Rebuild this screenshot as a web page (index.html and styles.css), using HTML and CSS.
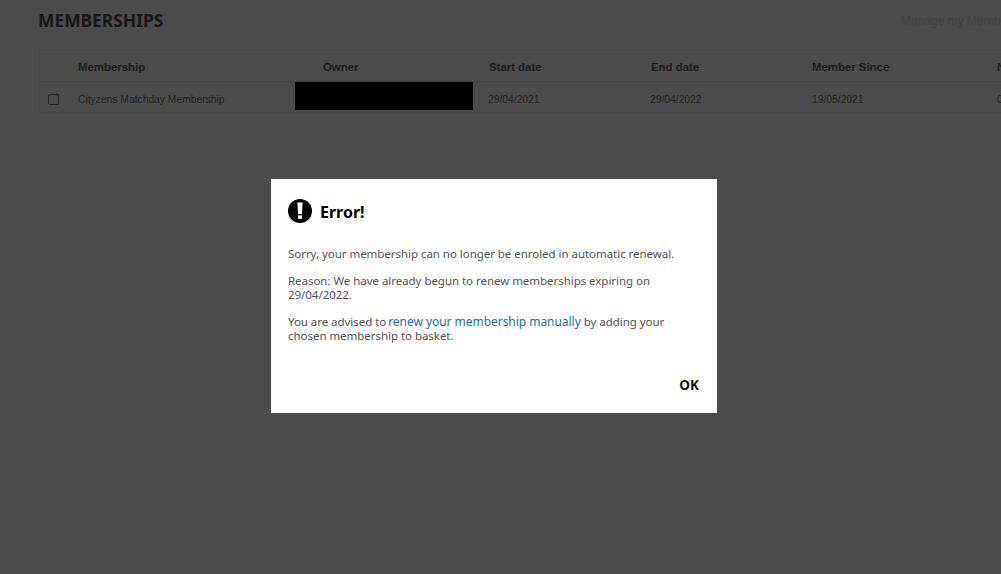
FILE: index.html
```html
<!DOCTYPE html>
<html lang="en">
<head>
<meta charset="utf-8">
<title>Memberships</title>
<link rel="stylesheet" href="styles.css">
</head>
<body>
<main class="page">
  <header class="page-head">
    <h1 class="page-title">MEMBERSHIPS</h1>
    <a class="manage-link">Manage my Memberships</a>
  </header>
  <section class="table">
    <div class="row head-row">
      <span></span>
      <span>Membership</span>
      <span class="owner-head">Owner</span>
      <span class="cell head-cell">Start date</span>
      <span class="cell head-cell">End date</span>
      <span class="cell">Member Since</span>
      <span class="cell">Next</span>
    </div>
    <div class="row body-row">
      <span class="check"></span>
      <span>Cityzens Matchday Membership</span>
      <span class="redacted"></span>
      <span class="cell">29/04/2021</span>
      <span class="cell">29/04/2022</span>
      <span class="cell">19/05/2021</span>
      <span class="cell">0</span>
    </div>
  </section>
</main>
<div class="overlay">
  <div class="dialog" role="dialog">
    <div class="dialog-head">
      <svg class="error-icon" viewBox="0 0 24 24" width="24" height="24" aria-hidden="true">
        <circle cx="12" cy="12" r="12" fill="#000"/>
        <path d="M9.3 3.5h5.4l-.8 11.5h-3.8z" fill="#fff"/>
        <rect x="10" y="16.3" width="4" height="3.5" fill="#fff"/>
      </svg>
      <h2 class="dialog-title">Error!</h2>
    </div>
    <p class="dialog-text">Sorry, your membership can no longer be enroled in automatic renewal.</p>
    <p class="dialog-text">Reason: We have already begun to renew memberships expiring on<br>29/04/2022.</p>
    <p class="dialog-text">You are advised to <a class="dialog-link">renew your membership manually</a> by adding your<br>chosen membership to basket.</p>
    <div class="dialog-actions"><button class="ok-button">OK</button></div>
  </div>
</div>
</body>
</html>
```
FILE: styles.css
```css
* { box-sizing: border-box; }
html, body { margin: 0; height: 100%; overflow: hidden; }
body { background: #4b4b4b; font-family: "Liberation Sans", Arial, sans-serif; }
.page { width: 1001px; padding: 10px 0 0 39px; overflow: hidden; }
.page-head { display: flex; justify-content: space-between; align-items: center; height: 20px; margin-bottom: 20px; width: 1000px; }
.page-title { margin: 0 0 0 -1px; font: 700 17.4px/20px "Noto Sans", sans-serif; color: #171717; }
.manage-link { font-size: 12px; padding-top: 2px; color: #424242; }
.table { width: 1100px; height: 63px; border: 1px solid #464646; border-right: 0; }
.row { display: grid; grid-template-columns: 38px 217px 178px 162px 162px 185px 100px; align-items: center; }
.cell { padding-left: 15px; }
.head-row { height: 31px; padding-top: 2px; font-size: 11.4px; font-weight: 700; color: #1e1e1e; border-bottom: 1px solid #464646; }
.head-row .owner-head { padding-left: 28px; }
.head-row .head-cell { padding-left: 16px; }
.body-row { height: 30px; padding-top: 4px; font-size: 10.3px; color: #242424; }
.check { width: 11px; height: 11px; margin-left: 8px; border: 1px solid #262626; border-radius: 2px; }
.redacted { height: 28px; align-self: start; margin-top: -4px; background: #000; }
.overlay { position: fixed; inset: 0; display: flex; padding: 179px 0 0 271px; }
.dialog { width: 446px; height: 234px; background: #fff; padding: 20px 17px 0; font-family: "Noto Sans", sans-serif; }
.dialog-head { display: flex; align-items: center; gap: 8px; height: 24px; margin-bottom: 24px; }
.error-icon { flex: none; }
.dialog-title { margin: 0; padding-top: 2px; font-size: 16px; line-height: 24px; font-weight: 700; color: #000; }
.dialog-text { margin: 0 0 13px; font-size: 11.5px; letter-spacing: -.04px; line-height: 14px; color: #525252; }
.dialog-link { font-size: 12px; color: #1a6ea8; margin-left: -1px; }
.dialog-actions { display: flex; justify-content: flex-end; margin-top: 34px; }
.ok-button { border: 0; background: none; padding: 0; margin-right: 1px; font: 700 13.5px/16px "Noto Sans", sans-serif; color: #111; }
```
